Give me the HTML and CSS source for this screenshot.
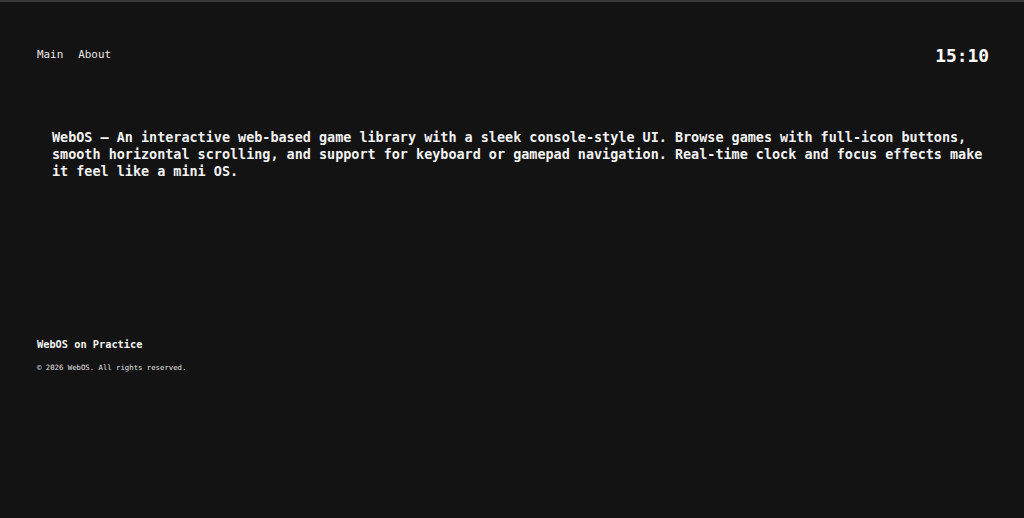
FILE: index.html
```html
<!DOCTYPE html>
<html lang="en">
<head>
<meta charset="utf-8">
<title>WebOS</title>
<link rel="stylesheet" href="styles.css">
</head>
<body>
<header class="topbar">
  <nav class="nav">
    <a class="nav-link" href="#">Main</a>
    <a class="nav-link" href="#">About</a>
  </nav>
  <div class="clock">15:10</div>
</header>
<main class="content">
  <p class="intro">WebOS – An interactive web-based game library with a sleek console-style UI. Browse games with full-icon buttons, smooth horizontal scrolling, and support for keyboard or gamepad navigation. Real-time clock and focus effects make it feel like a mini OS.</p>
</main>
<footer class="footer">
  <p class="footer-title">WebOS on Practice</p>
  <p class="copyright">© 2026 WebOS. All rights reserved.</p>
</footer>
</body>
</html>
```
FILE: styles.css
```css
html, body {
  margin: 0;
  padding: 0;
}
body {
  background: #141314;
  color: #f2f2f2;
  font-family: "DejaVu Sans Mono", "Liberation Mono", monospace;
  border-top: 2px solid #3a3a3a;
  min-height: 516px;
}
.topbar {
  display: flex;
  justify-content: space-between;
  align-items: center;
  height: 20px;
  padding: 43px 35px 0 37px;
}
.nav {
  display: flex;
  gap: 15px;
  margin-top: -1px;
}
.nav-link {
  color: #e8e8e8;
  text-decoration: none;
  font-size: 10.9px;
}
.clock {
  font-size: 17.9px;
  font-weight: bold;
  color: #ffffff;
}
.content {
  padding: 0 35px 0 52px;
}
.intro {
  margin: 63.5px 0 0 0;
  font-size: 13.45px;
  line-height: 17.3px;
  font-weight: bold;
  color: #f2f2f2;
}
.footer {
  padding: 0 35px 0 37px;
  margin-top: 157.5px;
}
.footer-title {
  margin: 0;
  font-size: 10.3px;
  font-weight: bold;
  color: #f5f5f5;
}
.copyright {
  margin: 13px 0 0 0;
  font-size: 7.3px;
  color: #e0e0e0;
}
```
